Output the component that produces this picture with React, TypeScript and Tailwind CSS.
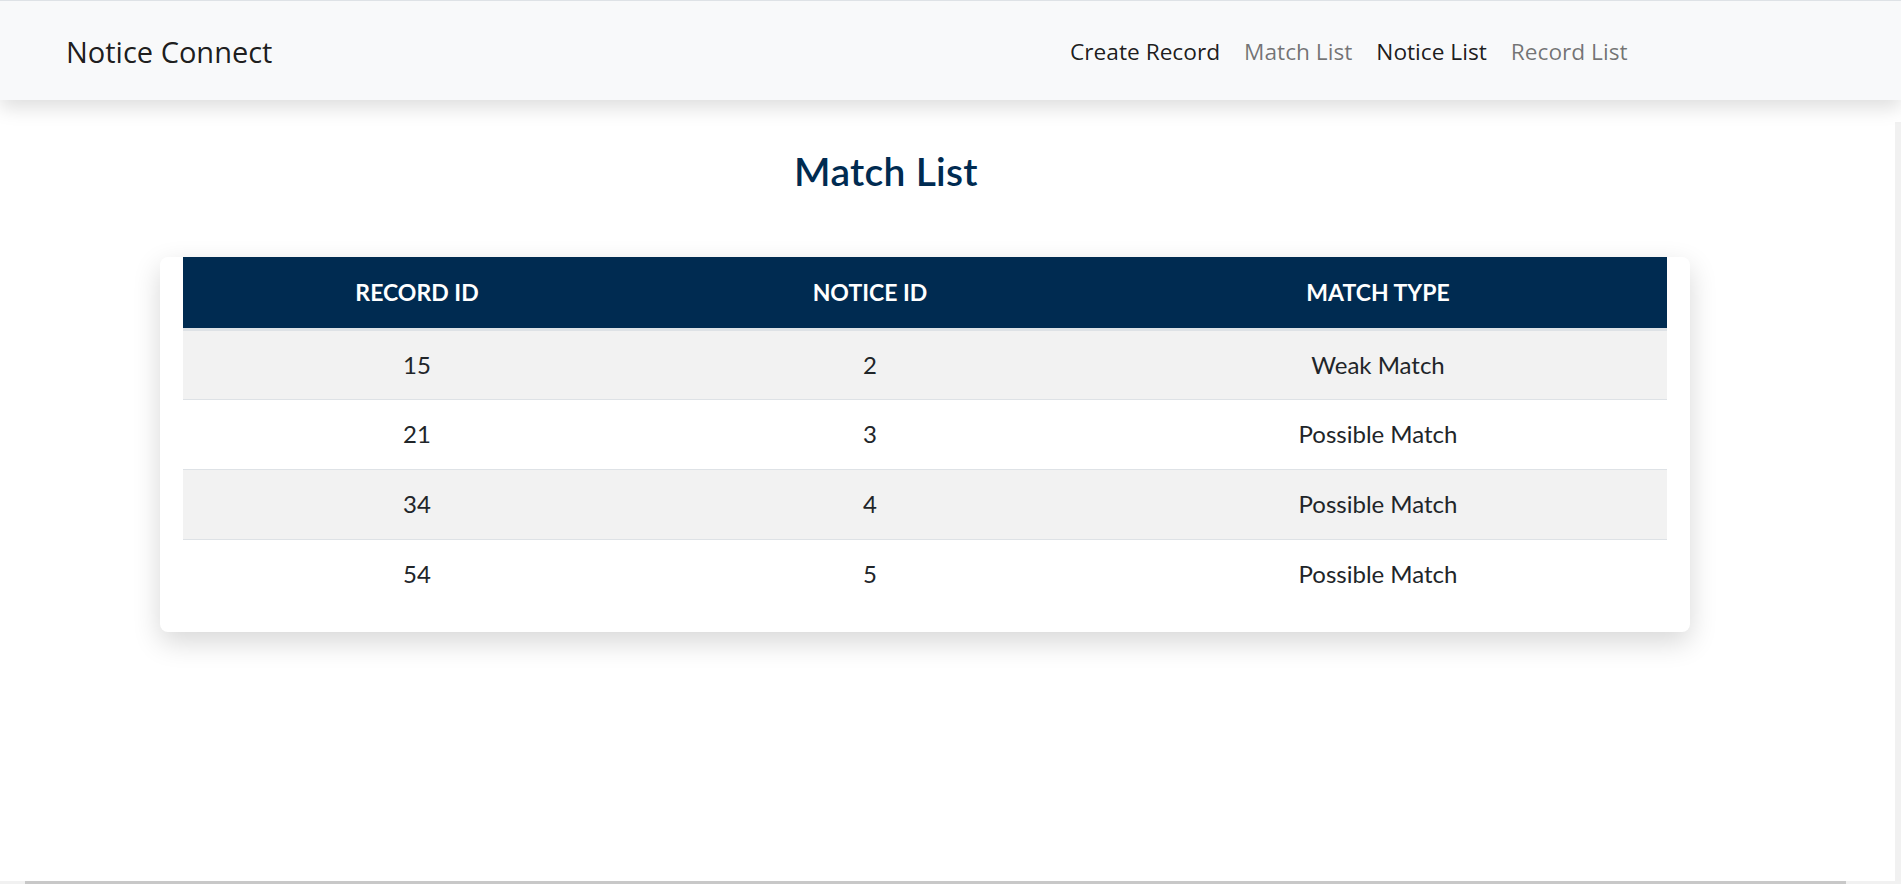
const matches = [
  { recordId: 15, noticeId: 2, matchType: 'Weak Match' },
  { recordId: 21, noticeId: 3, matchType: 'Possible Match' },
  { recordId: 34, noticeId: 4, matchType: 'Possible Match' },
  { recordId: 54, noticeId: 5, matchType: 'Possible Match' },
];

const links = [
  { label: 'Create Record', active: true },
  { label: 'Match List', active: false },
  { label: 'Notice List', active: true },
  { label: 'Record List', active: false },
];

export default function App() {
  return (
    <div className="h-[884px] w-full flex flex-col bg-white overflow-hidden">
      {/* navbar */}
      <nav className="relative z-10 h-[100px] shrink-0 border-t border-[#dee2e6] bg-[#f8f9fa] shadow-[0_8px_18px_rgba(0,0,0,0.13)] flex items-center font-['Open_Sans',sans-serif]">
        <div className="w-[1058px] pl-[66px] pt-[2px] text-[29px] text-[#000000e6] leading-none">Notice Connect</div>
        <ul className="flex items-center pt-[6px]">
          {links.map((l) => (
            <li key={l.label}>
              <a
                href="#"
                className={
                  'px-[12px] text-[22.7px] leading-none ' +
                  (l.active ? 'text-[#000000e6]' : 'text-[#0000008c]')
                }
              >
                {l.label}
              </a>
            </li>
          ))}
        </ul>
      </nav>

      <div className="flex-1 flex min-h-0">
        <main className="flex-1 min-w-0 font-['Lato',sans-serif]">
          <h2 className="w-[1772px] mt-[50px] text-center text-[39px] leading-[43px] font-semibold tracking-[0.3px] text-[#002b51]">
            Match List
          </h2>

          <div className="ml-[160px] mt-[64px] w-[1530px] rounded-lg bg-white px-[23px] pb-[23px] shadow-[0_10px_28px_rgba(0,0,0,0.16)]">
            <table className="w-full border-collapse text-center">
              <thead>
                <tr className="h-[72px] bg-[#002b51] text-white border-b-[3px] border-[#dee2e6]">
                  <th className="w-[468px] text-[23px] font-bold">RECORD ID</th>
                  <th className="w-[438px] text-[23px] font-bold">NOTICE ID</th>
                  <th className="text-[23px] font-bold">MATCH TYPE</th>
                </tr>
              </thead>
              <tbody>
                {matches.map((m, i) => (
                  <tr
                    key={m.recordId}
                    className={
                      'h-[70px] text-[24px] text-[#212529] ' +
                      (i % 2 === 0 ? 'bg-[#f2f2f2] ' : 'bg-white ') +
                      (i < matches.length - 1 ? 'border-b border-[#dee2e6]' : '')
                    }
                  >
                    <td>{m.recordId}</td>
                    <td>{m.noticeId}</td>
                    <td>{m.matchType}</td>
                  </tr>
                ))}
              </tbody>
            </table>
          </div>
        </main>
        {/* vertical scrollbar track */}
        <div className="w-[6px] mt-[22px] bg-[#f1f1f1]" />
      </div>

      {/* horizontal scrollbar */}
      <div className="h-[3px] shrink-0 flex bg-[#f1f1f1]">
        <div className="ml-[25px] w-[1821px] bg-[#c8c8c8]" />
      </div>
    </div>
  );
}
